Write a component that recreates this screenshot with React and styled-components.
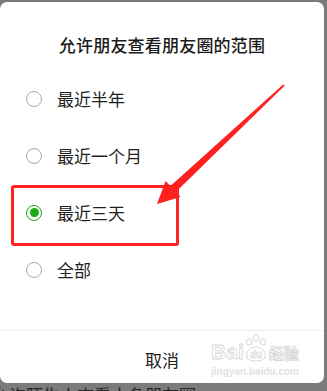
import React from 'react';
import styled, { createGlobalStyle } from 'styled-components';

const Global = createGlobalStyle`
  html, body { margin: 0; padding: 0; }
  body {
    width: 327px;
    height: 391px;
    overflow: hidden;
    background: #7b7b7b;
    font-family: "Noto Sans CJK SC", "Noto Sans", sans-serif;
  }
`;

const Page = styled.div`
  position: relative;
  width: 327px;
  height: 391px;
  overflow: hidden;
  background: #7b7b7b;
  display: flex;
  flex-direction: column;
  padding: 2px 3px 0 0;
  box-sizing: border-box;
`;

const Card = styled.div`
  position: relative;
  width: 324px;
  height: 381px;
  flex-shrink: 0;
  background: #fff;
  border-radius: 7px;
  display: flex;
  flex-direction: column;
`;

const Title = styled.h2`
  margin: 31px 0 0;
  font-size: 17px;
  line-height: 24px;
  font-weight: 500;
  color: #1b1b1b;
  text-align: center;
  letter-spacing: 0.2px;
`;

const List = styled.div`
  margin-top: 13px;
  display: flex;
  flex-direction: column;
`;

const Row = styled.div`
  height: 57px;
  display: flex;
  align-items: center;
  gap: 15px;
  padding-left: 26px;
  font-size: 17px;
  color: #1f1f1f;
`;

const Radio = styled.span`
  width: 16px;
  height: 16px;
  box-sizing: border-box;
  border-radius: 50%;
  border: 1.5px solid ${p => (p.$on ? '#1aad19' : '#a9a9a9')};
  display: flex;
  align-items: center;
  justify-content: center;
  &::after {
    content: '';
    display: ${p => (p.$on ? 'block' : 'none')};
    width: 9px;
    height: 9px;
    border-radius: 50%;
    background: #1aad19;
  }
`;

const Spacer = styled.div`
  flex: 1;
`;

const Divider = styled.div`
  height: 1px;
  background: #efefef;
`;

const Footer = styled.div`
  position: relative;
  height: 52px;
  display: flex;
  align-items: center;
  justify-content: center;
  padding-top: 4px;
  box-sizing: border-box;
  font-size: 17px;
  color: #1b1b1b;
  border-radius: 0 0 7px 7px;
`;

const Mark = styled.div`
  position: absolute;
  left: 211px;
  top: 3px;
  display: flex;
  flex-direction: column;
  align-items: center;
  color: transparent;
  -webkit-text-stroke: 0.8px #d6d6d6;
  font-family: "Liberation Sans", sans-serif;
  font-weight: bold;
`;

const MarkTop = styled.div`
  display: flex;
  align-items: flex-end;
  font-size: 21px;
  line-height: 22px;
`;

const MarkCn = styled.span`
  font-family: "Noto Sans CJK SC", sans-serif;
  font-size: 15px;
  line-height: 20px;
  margin-left: 1px;
`;

const MarkUrl = styled.div`
  font-size: 10px;
  line-height: 12px;
  margin-top: 3px;
  -webkit-text-stroke: 0;
  color: #e2e2e2;
`;

const Highlight = styled.div`
  position: absolute;
  left: 11px;
  top: 183px;
  width: 168px;
  height: 61px;
  box-sizing: border-box;
  border: 3px solid #ff2222;
  border-radius: 3px;
  pointer-events: none;
`;

const Behind = styled.div`
  margin-left: -8px;
  margin-top: 1px;
  font-size: 17px;
  line-height: 22px;
  color: #262626;
  white-space: nowrap;
`;

const Arrow = styled.svg`
  position: absolute;
  left: 0;
  top: 0;
  pointer-events: none;
`;

const options = ['最近半年', '最近一个月', '最近三天', '全部'];

export default function App() {
  return (
    <>
      <Global />
      <Page>
        <Card>
          <Title>允许朋友查看朋友圈的范围</Title>
          <List>
            {options.map((o, i) => (
              <Row key={o}>
                <Radio $on={i === 2} />
                {o}
              </Row>
            ))}
          </List>
          <Spacer />
          <Divider />
          <Footer>
            取消
            <Mark>
              <MarkTop>
                Bai
                <svg width="24" height="29" viewBox="0 0 24 29">
                  <g fill="none" stroke="#d6d6d6" strokeWidth="1">
                    <ellipse cx="5" cy="8" rx="2.6" ry="3.2" />
                    <ellipse cx="12" cy="4" rx="2.8" ry="3.3" />
                    <ellipse cx="19" cy="8" rx="2.6" ry="3.2" />
                    <path d="M3 24 C1 16 8 13 12 13 C16 13 23 16 21 24 C19 28 5 28 3 24 Z" />
                  </g>
                  <text x="12" y="24" textAnchor="middle" fontSize="10" fontWeight="bold" fill="none" stroke="#d6d6d6" strokeWidth="0.6" fontFamily="Liberation Sans, sans-serif">du</text>
                </svg>
                <MarkCn>经验</MarkCn>
              </MarkTop>
              <MarkUrl>jingyan.baidu.com</MarkUrl>
            </Mark>
          </Footer>
          <Highlight />
        </Card>
        <Behind>允许陌生人查看十条朋友圈</Behind>
        <Arrow width="327" height="391" viewBox="0 0 327 391">
          <polygon
            fill="#ff2020"
            points="284.8,85.6 283.2,84.4 170.4,186.1 165.6,181 157,204 180.6,197 175.8,191.9"
          />
        </Arrow>
      </Page>
    </>
  );
}
